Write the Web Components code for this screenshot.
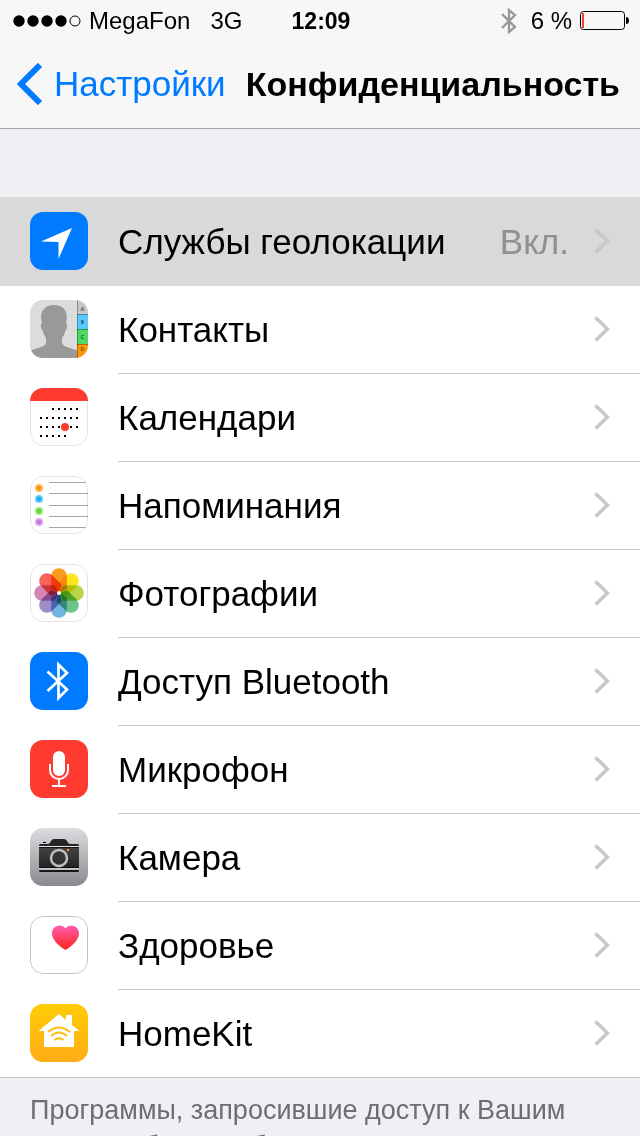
<!DOCTYPE html>
<html lang="ru">
<head>
  <meta charset="utf-8">
  <meta name="viewport" content="width=device-width, initial-scale=1">
  <title>Конфиденциальность</title>
  <style>
    body {
      margin: 0;
      background: #efeff4;
      color: #000;
      font-family: "Liberation Sans", Arial, sans-serif;
      overflow: hidden;
    }
  </style>
</head>
<body>
  <status-bar carrier="MegaFon" network="3G" time="12:09" battery="6"></status-bar>
  <nav-bar back="Настройки">Конфиденциальность</nav-bar>

  <settings-group>
    <settings-row icon="location" active>Службы геолокации<span slot="value">Вкл.</span></settings-row>
    <settings-row icon="contacts">Контакты</settings-row>
    <settings-row icon="calendar">Календари</settings-row>
    <settings-row icon="reminders">Напоминания</settings-row>
    <settings-row icon="photos">Фотографии</settings-row>
    <settings-row icon="bluetooth">Доступ Bluetooth</settings-row>
    <settings-row icon="microphone">Микрофон</settings-row>
    <settings-row icon="camera">Камера</settings-row>
    <settings-row icon="health">Здоровье</settings-row>
    <settings-row icon="homekit">HomeKit</settings-row>
    <span slot="footer">Программы, запросившие доступ к Вашим данным, будут добавлены в приведенные выше категории.</span>
  </settings-group>

  <script>
    // row of 2px dots for the calendar icon
    function dots(y, from, to) {
      let out = "";
      for (let x = from; x <= to; x += 6) {
        out += `<rect x="${x - 1}" y="${y - 1}" width="2" height="2"/>`;
      }
      return out;
    }

    const petals = ["#fa9a1e", "#fbe51e", "#b5d645", "#6cc48a", "#72b4e2", "#a08cc8", "#d386b4", "#f7635c"]
      .map((color, i) => `<path transform="rotate(${i * 45})" fill="${color}" d="M0 0L-7.800-4V-17A7.800 7.800 0 0 1 7.800-17V-4Z"/>`)
      .join("");

    const reminders = [[12, "#ff9500"], [23, "#1badf8"], [35, "#63da38"], [46, "#cc73e1"]]
      .map(([y, color]) => `<g fill="${color}"><circle cx="9" cy="${y}" r="4" opacity=".65"/><circle cx="9" cy="${y}" r="2.3"/></g>`)
      .join("");

    const icons = {
      location: `
        <rect width="58" height="58" fill="#007aff"/>
        <path d="M42 16L11 29.500 28.500 30 28.500 47Z" fill="#fff"/>`,
      contacts: `
        <rect width="58" height="58" fill="#dcdcdc"/>
        <path d="M0 58V51C5 48 14 48 16 43V38C14 35 13 33 13 31 11 30 10 24 12 23 9 12 14 5 24 5S39 12 36 23C38 24 37 30 35 31 35 33 34 35 32 38V43C34 48 43 48 48 51V58Z" fill="#999"/>
        <rect x="47" width="11" height="14" fill="#c8c7c2"/>
        <rect x="47" y="14" width="11" height="15" fill="#5ac8fa"/>
        <rect x="47" y="29" width="11" height="15" fill="#4cd964"/>
        <rect x="47" y="44" width="11" height="14" fill="#ff9500"/>
        <path d="M47.500 0V58M47 14.500H58M47 29.500H58M47 44.500H58" stroke="#000" stroke-opacity=".3" fill="none"/>
        <g stroke="#000" stroke-opacity=".42" fill="none">
          <path d="M51 11L52.500 7 54 11M51.500 9.800H53.500"/>
          <path d="M51.500 20.500H53L53.500 22 53 23.500H51.500ZM51.500 22H53.500"/>
          <path d="M54 35.500H51.500V38.500H54"/>
          <path d="M51.500 47.500H53L54 49 53 50.500H51.500Z"/>
        </g>`,
      calendar: `
        <rect width="58" height="58" fill="#fff"/>
        <rect x=".5" y=".5" width="57" height="57" rx="12.500" fill="none" stroke="#e3e3e5"/>
        <rect width="58" height="13" fill="#ff3b30"/>
        ${dots(21, 23, 47)}${dots(30, 11, 47)}${dots(39, 11, 47)}${dots(48, 11, 35)}
        <circle cx="35" cy="39" r="4" fill="#ff3b30"/>`,
      reminders: `
        <rect width="58" height="58" fill="#fff"/>
        <rect x=".5" y=".5" width="57" height="57" rx="12.500" fill="none" stroke="#e3e3e5"/>
        ${reminders}
        <path d="M19 6.500H56M19 17.500H58M19 29.500H58M19 40.500H58M19 51.500H56" stroke="#a6a6aa"/>`,
      photos: `
        <rect width="58" height="58" fill="#fff"/>
        <rect x=".5" y=".5" width="57" height="57" rx="12.500" fill="none" stroke="#e3e3e5"/>
        <g class="petals" transform="translate(29 29)">${petals}</g>
        <circle cx="29" cy="29" r="2" fill="#fff"/>`,
      bluetooth: `
        <rect width="58" height="58" fill="#007aff"/>
        <path d="M17.500 19.500L37 37.500 28.500 46V12.500L37 21 17.500 39" fill="none" stroke="#fff" stroke-width="2.700"/>`,
      microphone: `
        <rect width="58" height="58" fill="#ff3b30"/>
        <rect x="23" y="11" width="12" height="25" rx="6" fill="#fff"/>
        <path d="M20 24V30A9 9 0 0 0 38 30V24M29 39V46M22 46H36" fill="none" stroke="#fff" stroke-width="2"/>`,
      camera: `
        <linearGradient id="steel" x2="0" y2="1"><stop stop-color="#dcdddf"/><stop offset="1" stop-color="#888a90"/></linearGradient>
        <linearGradient id="body" x2="0" y2="1"><stop stop-color="#444"/><stop offset="1" stop-color="#222"/></linearGradient>
        <rect width="58" height="58" fill="url(#steel)"/>
        <path d="M9 18V17L10 16H18Q20 16 21 13Q22 11 24 11H34Q36 11 37 13Q38 16 40 16H48L49 17V18Z" fill="#252525"/>
        <rect x="13" y="14" width="3" height="1"/>
        <rect x="9" y="19" width="40" height="21" fill="url(#body)"/>
        <path d="M9 19.500H49M9 39.500H49" stroke="#111"/>
        <path d="M9 18.500H49M9 41H49" stroke="#e4e5e7"/>
        <path d="M9 42H49V43L48 44H10L9 43Z" fill="#151515"/>
        <circle cx="29" cy="30" r="8" fill="#333" stroke="#bfc0c4" stroke-width="2.500"/>
        <rect x="37" y="21" width="2" height="2" fill="#f5a800"/>`,
      health: `
        <linearGradient id="heart" x2="0" y2="1"><stop stop-color="#ff5db1"/><stop offset="1" stop-color="#ff2419"/></linearGradient>
        <rect width="58" height="58" fill="#fff"/>
        <rect x=".5" y=".5" width="57" height="57" rx="12.500" fill="none" stroke="#c3c3c5"/>
        <path d="M35.500 34C29 30 22 24 22 17.500 22 9 32 7 35.500 12.500 39 7 49 9 49 17.500 49 24 42 30 35.500 34Z" fill="url(#heart)"/>`,
      homekit: `
        <linearGradient id="amber" x2="0" y2="1"><stop stop-color="#ffcc05"/><stop offset="1" stop-color="#ffad16"/></linearGradient>
        <rect width="58" height="58" fill="url(#amber)"/>
        <path d="M8.500 27L29 10 36 16V11H42V21L49.500 27H44V43H14V27Z" fill="#fff"/>
        <path d="M18 28Q29 19 40 28M21 32Q29 25 37 32M24.500 36Q29 32.500 33.500 36" fill="none" stroke="#ffbb0e" stroke-width="2"/>`
    };

    class AppIcon extends HTMLElement {
      constructor() {
        super();
        this.attachShadow({ mode: "open" });
      }

      connectedCallback() {
        this.shadowRoot.innerHTML = `
          <style>
            :host {
              display: block;
              flex: none;
              width: 58px;
              height: 58px;
              border-radius: 13px;
              overflow: hidden;
            }
            svg {
              display: block;
            }
            .petals {
              isolation: isolate;
            }
            .petals path {
              mix-blend-mode: multiply;
            }
          </style>
          <svg width="58" height="58" viewBox="0 0 58 58" aria-hidden="true">${icons[this.getAttribute("name")] || ""}</svg>
        `;
      }
    }

    class StatusBar extends HTMLElement {
      constructor() {
        super();
        this.attachShadow({ mode: "open" });
      }

      connectedCallback() {
        const level = Number(this.getAttribute("battery"));
        this.shadowRoot.innerHTML = `
          <style>
            :host {
              display: grid;
              grid-template-columns: 1fr auto 1fr;
              align-items: center;
              height: 40px;
              padding: 0 11px 0 13px;
              background: #f7f7f7;
              font-size: 24px;
              line-height: 42px;
            }
            .side {
              display: flex;
              align-items: center;
            }
            .end {
              justify-content: flex-end;
            }
            .signal {
              margin-right: 8px;
            }
            .network {
              margin-left: 20px;
            }
            .time {
              font-size: 23px;
              font-weight: bold;
            }
            .level {
              margin: 0 8px 0 14px;
            }
          </style>
          <div class="side">
            <svg class="signal" width="68" height="12" viewBox="0 0 68 12">
              <circle cx="6" cy="6" r="5.700"/>
              <circle cx="20" cy="6" r="5.700"/>
              <circle cx="34" cy="6" r="5.700"/>
              <circle cx="48" cy="6" r="5.700"/>
              <circle cx="62" cy="6" r="5" fill="none" stroke="#000"/>
            </svg>
            <span>${this.getAttribute("carrier")}</span>
            <span class="network">${this.getAttribute("network")}</span>
          </div>
          <span class="time">${this.getAttribute("time")}</span>
          <div class="side end">
            <svg width="16" height="28" viewBox="0 0 16 28">
              <path d="M1 7L14 20 8 25V3L14 8 1 21" fill="none" stroke="#999" stroke-width="2.300"/>
            </svg>
            <span class="level">${level} %</span>
            <svg width="49" height="20" viewBox="0 0 49 20">
              <rect x=".5" y=".5" width="44" height="18" rx="3" fill="none" stroke="#000"/>
              <rect x="2" y="2" width="${Math.max(2, Math.round(level * 0.41))}" height="15" fill="#ff3b30"/>
              <path d="M46 6Q49 6 49 9.500T46 13Z"/>
            </svg>
          </div>
        `;
      }
    }

    class NavBar extends HTMLElement {
      constructor() {
        super();
        this.attachShadow({ mode: "open" });
      }

      connectedCallback() {
        this.shadowRoot.innerHTML = `
          <style>
            :host {
              display: flex;
              align-items: center;
              justify-content: space-between;
              height: 88px;
              padding: 0 20px 0 17px;
              border-bottom: 1px solid #a7a7ab;
              background: #f7f7f7;
              font-size: 35px;
              line-height: 42px;
              white-space: nowrap;
            }
            a {
              display: flex;
              align-items: center;
              gap: 11px;
              color: #007aff;
              text-decoration: none;
            }
            h1 {
              margin: 0;
              font-size: 34px;
              font-weight: bold;
            }
          </style>
          <a href="#">
            <svg width="26" height="42" viewBox="0 0 26 42" aria-hidden="true">
              <path d="M23 2L4 21 23 40" fill="none" stroke="#007aff" stroke-width="6"/>
            </svg>
            <span>${this.getAttribute("back")}</span>
          </a>
          <h1><slot></slot></h1>
        `;
      }
    }

    class SettingsRow extends HTMLElement {
      constructor() {
        super();
        this.attachShadow({ mode: "open" });
      }

      connectedCallback() {
        this.shadowRoot.innerHTML = `
          <style>
            :host {
              display: block;
              background: #fff;
            }
            :host([active]) {
              background: #d9d9d9;
            }
            button {
              display: flex;
              align-items: stretch;
              gap: 30px;
              width: 100%;
              height: 88px;
              padding: 0 0 0 30px;
              border: 0;
              background: none;
              color: inherit;
              font: inherit;
              font-size: 35px;
              line-height: 42px;
              text-align: left;
            }
            app-icon {
              margin-top: 14px;
            }
            .content {
              display: flex;
              flex: 1;
              align-items: center;
              padding-right: 30px;
              border-bottom: 1px solid #c8c7cc;
            }
            :host([active]) .content {
              border-color: transparent;
            }
            :host(:last-of-type) button {
              height: 87px;
            }
            :host(:last-of-type) .content {
              border: 0;
            }
            .label {
              flex: 1;
            }
            .value {
              margin-right: 25px;
              color: #8e8e93;
            }
            svg {
              margin-bottom: 2px;
            }
          </style>
          <button type="button">
            <app-icon name="${this.getAttribute("icon")}"></app-icon>
            <span class="content">
              <span class="label"><slot></slot></span>
              <span class="value"><slot name="value"></slot></span>
              <svg width="16" height="26" viewBox="0 0 16 26" aria-hidden="true">
                <path d="M1.500 1.500L13.500 13 1.500 24.500" fill="none" stroke="#c7c7cc" stroke-width="3.500"/>
              </svg>
            </span>
          </button>
        `;
      }
    }

    class SettingsGroup extends HTMLElement {
      constructor() {
        super();
        this.attachShadow({ mode: "open" });
      }

      connectedCallback() {
        this.shadowRoot.innerHTML = `
          <style>
            :host {
              display: block;
              padding-top: 68px;
            }
            .rows {
              border-top: 1px solid #d9d9d9;
              border-bottom: 1px solid #c8c7cc;
              margin-bottom: 14px;
            }
            .footer {
              margin: 0;
              padding: 0 30px;
              color: #6d6d72;
              font-size: 27px;
              line-height: 36px;
            }
          </style>
          <div class="rows"><slot></slot></div>
          <p class="footer"><slot name="footer"></slot></p>
        `;
      }
    }

    customElements.define("app-icon", AppIcon);
    customElements.define("status-bar", StatusBar);
    customElements.define("nav-bar", NavBar);
    customElements.define("settings-row", SettingsRow);
    customElements.define("settings-group", SettingsGroup);
  </script>
</body>
</html>
